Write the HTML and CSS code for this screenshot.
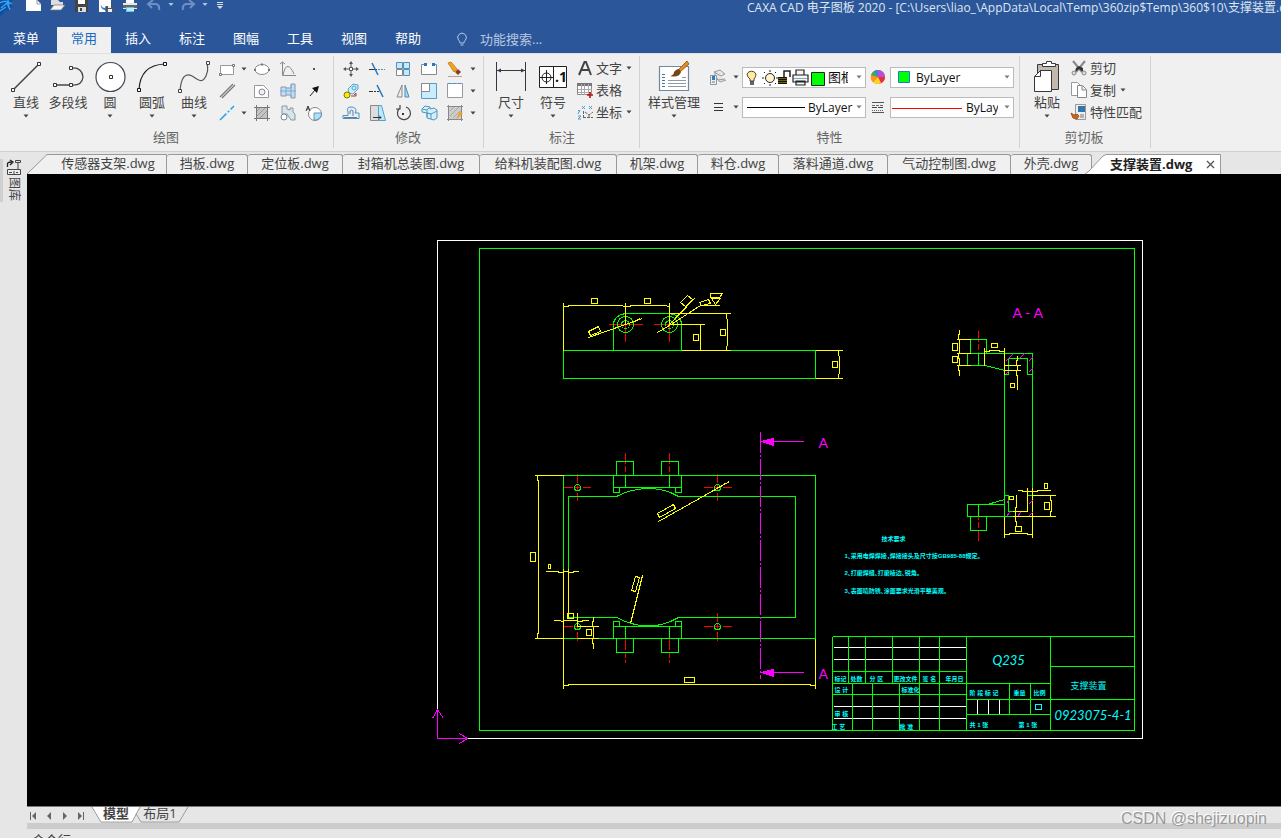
FILE: index.html
```html
<!DOCTYPE html>
<html lang="zh-CN">
<head>
<meta charset="utf-8">
<title>CAXA CAD 电子图板 2020</title>
<link rel="stylesheet" href="styles.css">
</head>
<body>
<svg class="defs" aria-hidden="true">
  <symbol id="caret" viewBox="0 0 10 10"><path d="M2.500 3.500h5L5 6.500z" fill="#444"/></symbol>
</svg>
<div class="app">
  <header class="titlebar">
    <div class="quick">
      <svg width="16" height="16" viewBox="0 0 16 16"><path d="M0 0h13l-2 4 2 3-4 1 2 3-4-1-3 1-1 3-3 2z" fill="#0b4f9e"/><path d="M0 3c4-3 8-2 12 1M1 8l6-5 3 7M0 11l6-4M8 0l1 8" stroke="#37a0f0" stroke-width="1.500" fill="none"/></svg>
      <button aria-label="新建"><svg width="16" height="14" viewBox="0 0 16 14"><path d="M0 0h11l4 4v7H0z" fill="#fff"/><path d="M11 0v4h4" fill="none" stroke="#999"/></svg></button>
      <button aria-label="打开"><svg width="16" height="14" viewBox="0 0 16 14"><path d="M1 0h7l2 2h3v3H1z" fill="#ddd"/><path d="M0 10L4 5h11l-4 5z" fill="#f4f4f4" stroke="#777" stroke-width=".7"/></svg></button>
      <button aria-label="保存"><svg width="16" height="14" viewBox="0 0 16 14"><path d="M1 0h13v12H1z" fill="#444"/><path d="M4 0h7v4H4z" fill="#fff"/><path d="M4 7h8v5H4z" fill="#ddd"/><path d="M6 8h2v3H6z" fill="#444"/></svg></button>
      <button aria-label="另存为"><svg width="16" height="14" viewBox="0 0 16 14"><path d="M1 0h12v12H1z" fill="#fff"/><path d="M3 3v2q1 3 4 3V6l3 3-3 3v-2Q2 9 3 3z" fill="#2b78bd"/><path d="M8 6h7v6H8z" fill="#555"/><path d="M10 6h3v2h-3zM10 9h4v3h-4z" fill="#eee"/></svg></button>
      <button aria-label="打印"><svg width="16" height="14" viewBox="0 0 16 14"><path d="M4 0h8v3H4z" fill="#fff"/><path d="M1 3h14v6H1z" fill="#e8e8e8"/><path d="M1 5h14v3H1z" fill="#666"/><path d="M4 7h8v5H4z" fill="#5fc7e8"/><path d="M5 8h7v3H5z" fill="#bcecfa"/></svg></button>
      <button aria-label="撤销"><svg width="16" height="14" viewBox="0 0 16 14"><path d="M2 4h8q4 1 3 6M7 0L2 4l4 4" fill="none" stroke="#6f8fc3" stroke-width="2"/></svg></button>
      <svg class="qc" width="10" height="10" viewBox="0 0 10 10"><path d="M2.500 3h5L5 6z" fill="#b5c4df"/></svg>
      <button aria-label="重做"><svg width="16" height="14" viewBox="0 0 16 14"><path d="M14 4H6Q2 5 3 10M9 0l5 4-4 4" fill="none" stroke="#6f8fc3" stroke-width="2"/></svg></button>
      <svg class="qc" width="10" height="10" viewBox="0 0 10 10"><path d="M2.500 3h5L5 6z" fill="#b5c4df"/></svg>
      <svg class="qc" width="12" height="10" viewBox="0 0 12 10"><path d="M3 2.500h6M3 4.500h6" stroke="#ddd"/><path d="M3 6h6L6 9z" fill="#ddd"/></svg>
    </div>
    <h1>CAXA CAD 电子图板 2020 - [C:\Users\liao_\AppData\Local\Temp\360zip$Temp\360$10\支撑装置.dwg]</h1>
  </header>
  <nav class="menu">
    <button class="file">菜单</button><button class="on">常用</button><button>插入</button><button>标注</button><button>图幅</button><button>工具</button><button>视图</button><button>帮助</button>
    <label class="search"><svg width="12" height="16" viewBox="0 0 12 16"><path d="M4 11Q4 9 2.500 8a4.300 4.300 0 1 1 7 0Q8 9 8 11zM4.500 13h3" fill="none" stroke="#b9c7df"/></svg><input placeholder="功能搜索..." aria-label="功能搜索"></label>
  </nav>
  <section class="ribbon">
    <div class="group draw">
      <div class="body">
        <button class="big"><svg width="36" height="36" viewBox="0 0 36 36"><path d="M5 32L31 6" stroke="#444852" stroke-width="1.600"/><path d="M3.500 30.500h3v3h-3zM29.500 4.500h3v3h-3z" fill="#fff" stroke="#333" stroke-width="1"/></svg>直线<svg class="caret"><use href="#caret"/></svg></button>
        <button class="big"><svg width="36" height="36" viewBox="0 0 36 36"><path d="M5 27H21q11 1 12-8-1-10-12-9" fill="none" stroke="#444852" stroke-width="1.300"/><path d="M3.500 25.500h3v3h-3zM19.500 25.500h3v3h-3zM19.500 8.500h3v3h-3z" fill="#fff" stroke="#333"/></svg>多段线</button>
        <button class="big"><svg width="36" height="36" viewBox="0 0 36 36"><circle cx="18.500" cy="19" r="14.500" fill="#fff" stroke="#444852" stroke-width="1.200"/><path d="M17.500 17.500h3v3h-3z" fill="#fff" stroke="#333"/></svg>圆<svg class="caret"><use href="#caret"/></svg></button>
        <button class="big"><svg width="36" height="36" viewBox="0 0 36 36"><path d="M5 32Q6 7 31 6" fill="none" stroke="#222" stroke-width="1.200"/><path d="M3.500 30.500h3v3h-3zM29.500 4.500h3v3h-3z" fill="#fff" stroke="#111"/></svg>圆弧<svg class="caret"><use href="#caret"/></svg></button>
        <button class="big"><svg width="36" height="36" viewBox="0 0 36 36"><path d="M4 33C5 20 9 14 16 18S26 26 30 18 30 9 32 5" fill="none" stroke="#555" stroke-width="1.200"/><path d="M2.500 31.500h3v3h-3zM30.500 3.500h3v3h-3z" fill="#fff" stroke="#444"/></svg>曲线<svg class="caret"><use href="#caret"/></svg></button>
        <div class="tools draw-tools">
          <button aria-label="矩形"><svg viewBox="0 0 18 18"><path d="M2.500 5.500h13v9h-13z" fill="#fff" stroke="#999"/><path d="M1.500 13.500h2v2h-2zM14.500 4.500h2v2h-2z" fill="#fff" stroke="#777"/></svg></button><svg class="caret"><use href="#caret"/></svg>
          <button aria-label="椭圆"><svg viewBox="0 0 18 18"><ellipse cx="9" cy="9.500" rx="7" ry="5" fill="#fff" stroke="#888"/><path d="M1 9h2v2H1zM15 9h2v2h-2zM8 3.500h2v2H8z" fill="#777"/></svg></button>
          <button aria-label="公式曲线"><svg viewBox="0 0 18 18"><path d="M3.500 2v13.500H17M1 4l2.500-2L6 4M4 15Q6 6 9 6.500T15 14" fill="none" stroke="#888"/></svg></button>
          <button aria-label="点"><svg viewBox="0 0 18 18"><path d="M8 8h2v2H8z" fill="#555"/></svg></button>
          <button aria-label="平行线"><svg viewBox="0 0 18 18"><path d="M2 15L15 2M4 16L17 3" stroke="#777" stroke-width="1.300"/></svg></button><i></i>
          <button aria-label="局部放大"><svg viewBox="0 0 18 18"><path d="M1.500 3.500h9l5 5v7h-14z" fill="#fff" stroke="#999"/><circle cx="9" cy="10" r="3" fill="#eef" stroke="#888"/></svg></button>
          <button aria-label="轴"><svg viewBox="0 0 18 18"><path d="M2 5h5v1h5V2h4v14h-4v-3H7v1H2z" fill="#c8dcf0" stroke="#8799aa"/><path d="M1 9h16M7 6v7M12 3v12" stroke="#6faede"/></svg></button>
          <button aria-label="箭头"><svg viewBox="0 0 18 18"><path d="M5 14l5-6" stroke="#222"/><path d="M14 4l-2 7-5-5z" fill="#111"/></svg></button>
          <button aria-label="中心线"><svg viewBox="0 0 18 18"><path d="M2 16L16 2" stroke="#27a5e8" stroke-width="1.500" stroke-dasharray="9 2 2 2"/></svg></button><svg class="caret"><use href="#caret"/></svg>
          <button aria-label="剖面线"><svg viewBox="0 0 18 18"><path d="M3 3h12v12H3z" fill="#c4c4c4"/><path d="M4 7l4-4M4 12l9-9M7 14l7-7" stroke="#999"/><path d="M3.500 1v16M14.500 1v16M1 3.500h16M1 14.500h16" stroke="#777" fill="none"/></svg></button>
          <button aria-label="孔"><svg viewBox="0 0 18 18"><path d="M3 2h5v3l3 1V4h3v4l2 2v6h-4l-2-3-2-3H3z" fill="#d6e4f0" stroke="#899"/><circle cx="5" cy="13" r="3" fill="#fff" stroke="#788"/></svg></button>
          <button aria-label="面积"><svg viewBox="0 0 18 18"><circle cx="10" cy="10" r="6.500" fill="#fff" stroke="#888"/><path d="M9 9h7.500a6.500 6.500 0 0 1-7.500 7z" fill="#aee0f8" stroke="#69a"/><path d="M1 7l2-5 2 5M2 5h2" fill="none" stroke="#333"/></svg></button>
        </div>
      </div>
      <h2>绘图</h2>
    </div>
    <div class="group modify">
      <div class="body">
        <div class="tools modify-tools">
          <button aria-label="平移"><svg viewBox="0 0 18 18"><path d="M9 1l2 3H7zM9 17l2-3H7zM1 9l3-2v4zM17 9l-3-2v4z" fill="#555"/><path d="M9 4v3M9 11v3M4 9h3M11 9h3" stroke="#555"/><path d="M7.500 7.500h3v3h-3z" fill="#fff" stroke="#555"/></svg></button>
          <button aria-label="裁剪"><svg viewBox="0 0 18 18"><path d="M1 9.500h8" stroke="#333"/><path d="M4 3l6 12" stroke="#2478bd" stroke-width="1.500"/><path d="M10 9.500h7" stroke="#3197d3" stroke-dasharray="2 1"/></svg></button>
          <button aria-label="阵列"><svg viewBox="0 0 18 18"><path d="M2.500 2.500h6v6h-6zM9.500 2.500h6v6h-6zM9.500 9.500h6v6h-6z" fill="#c6eafa" stroke="#568eb8"/><path d="M2.500 9.500h6v6h-6z" fill="#fff" stroke="#888"/></svg></button>
          <button aria-label="打断"><svg viewBox="0 0 18 18"><path d="M5 4.500H1.500v10h15v-10H13" fill="#fff" stroke="#888"/><path d="M4 3h3v3H4zM12 3h3v3h-3z" fill="#237bc4"/></svg></button>
          <button aria-label="删除"><svg viewBox="0 0 18 18"><path d="M2 3l3-1 6 7-3 3z" fill="#f2a416" stroke="#c98b20"/><path d="M9 12l3-3 3 3-3 3z" fill="#8c3b25"/><path d="M2 16.500h14" stroke="#b9a48d"/></svg></button><svg class="caret"><use href="#caret"/></svg>
          <button aria-label="复制"><svg viewBox="0 0 18 18"><path d="M6 7l5-5 5 1v4l-5 5-4-1z" fill="#ccecfa" stroke="#58a4d2"/><circle cx="12" cy="6" r="2" fill="none" stroke="#58a4d2"/><circle cx="5" cy="13" r="3" fill="#fbe80c" stroke="#827900"/><path d="M9 14h5v-3l-2 2" fill="none" stroke="#a33"/></svg></button>
          <button aria-label="延伸"><svg viewBox="0 0 18 18"><path d="M1 9.500h4" stroke="#333"/><path d="M6 9.500h7" stroke="#333" stroke-dasharray="2 1"/><path d="M9 3l6 12" stroke="#2478bd" stroke-width="1.500"/></svg></button>
          <button aria-label="镜像"><svg viewBox="0 0 18 18"><path d="M8 3v12H3z" fill="#eee" stroke="#888"/><path d="M11 3v12h4z" fill="#a7d8f2" stroke="#508eb3"/></svg></button>
          <button aria-label="缩放"><svg viewBox="0 0 18 18"><path d="M1.500 1.500h15v15h-15z" fill="#c8edff" stroke="#5a99c0"/><path d="M1.500 1.500h8v8h-8z" fill="#fff" stroke="#888"/></svg></button>
          <button aria-label="分解"><svg viewBox="0 0 18 18"><path d="M1.500 1.500h15v14h-15z" fill="#fff" stroke="#999"/><path d="M2 1.500h15" stroke="#369ad3" stroke-dasharray="3 2"/></svg></button><svg class="caret"><use href="#caret"/></svg>
          <button aria-label="偏移"><svg viewBox="0 0 18 18"><path d="M1 11.500h5V8Q4 3 9 3t5 4l-1 2h4v5.500H1z" fill="#e0f1fa" stroke="#4f91b9"/><path d="M2 13.500h13M8 10V7q2-2 3 0v5" fill="none" stroke="#778"/></svg></button>
          <button aria-label="拉伸"><svg viewBox="0 0 18 18"><path d="M2.500 1.500h8v15h-8z" fill="#ddd" stroke="#888"/><path d="M10.500 1.500h3l4 15h-7z" fill="#bfe9fa" stroke="#54a2cb"/><path d="M5 13.500h8m-2-2l2 2-2 2" stroke="#333" fill="none"/></svg></button>
          <button aria-label="旋转"><svg viewBox="0 0 18 18"><path d="M6 4a6.500 6.500 0 1 0 6-1M6 1v4H2" fill="none" stroke="#444" stroke-width="1.200"/><path d="M8 9h2v2H8z" fill="#333"/></svg></button>
          <button aria-label="三维"><svg viewBox="0 0 18 18"><path d="M2 5l3-3 5 1v2l4-1 3 2v8l-3 2-7-2V9L2 8z" fill="#d4eff9" stroke="#4896bd"/><path d="M2 5l5 1v7M7 6l3-3M7 9l4 1v5M11 10l6-3M11 10L7 9" fill="none" stroke="#559bc2"/></svg></button>
          <button aria-label="编辑填充"><svg viewBox="0 0 18 18"><path d="M3 3h12v12H3z" fill="#ccc"/><path d="M4 7l4-4M4 12l9-9M7 14l7-7" stroke="#aaa"/><path d="M2.500 1v16M15.500 1v16M1 2.500h16M1 15.500h16" stroke="#888" fill="none"/><path d="M10 15l4-8 3 2-5 5z" fill="#eda225"/></svg></button><svg class="caret"><use href="#caret"/></svg>
        </div>
      </div>
      <h2>修改</h2>
    </div>
    <div class="group annotate">
      <div class="body">
        <button class="big"><svg width="36" height="36" viewBox="0 0 36 36"><path d="M3.500 4v29M32.500 4v29M4 12.500h28" stroke="#333842"/><path d="M4 12.500l4-2v4zM32 12.500l-4-2v4z" fill="#333842"/></svg>尺寸<svg class="caret"><use href="#caret"/></svg></button>
        <button class="big"><svg width="36" height="36" viewBox="0 0 36 36"><path d="M4.500 8.500h27v21h-27zM18.500 8v22" fill="#fff" stroke="#222"/><circle cx="11.500" cy="19.500" r="4.500" fill="none" stroke="#222"/><path d="M5 19.500h13M11.500 12v14" stroke="#222"/><text x="20" y="24" class="icon-num">.1</text></svg>符号<svg class="caret"><use href="#caret"/></svg></button>
        <div class="rows">
          <button class="small"><svg viewBox="0 0 18 18"><path d="M3 16L8.500 3h1.500L15 16M5 11h8" stroke="#444" stroke-width="2" fill="none"/></svg>文字<svg class="caret"><use href="#caret"/></svg></button>
          <button class="small"><svg viewBox="0 0 18 18"><path d="M1.500 2.500h14v11h-14z" fill="#fff" stroke="#888"/><path d="M1 2h15v3H1z" fill="#777"/><path d="M2 8.500h14M2 11.500h14M5.500 3v11M8.500 3v11M12.500 3v11" stroke="#aaa"/><path d="M11 14h6M14 11v6" stroke="#b31414" stroke-width="1.600"/></svg>表格</button>
          <button class="small"><svg viewBox="0 0 18 18"><path d="M6 3l3 3M9 3L6 6M13 3l3 3M16 3l-3 3M2 7l2 2M4 7l-2 4M2 13h3l-3 3h3" stroke="#4a9bd0" fill="none"/><path d="M7.500 8v8M7 14.500h10M9 9l4 3 4-3M13 12v4" stroke="#666" fill="none" stroke-dasharray="3 1"/></svg>坐标<svg class="caret"><use href="#caret"/></svg></button>
        </div>
      </div>
      <h2>标注</h2>
    </div>
    <div class="group props">
      <div class="body">
        <button class="big wide"><svg width="36" height="36" viewBox="0 0 36 36"><path d="M3.500 8.500h29v24h-29z" fill="#fff" stroke="#71889e" stroke-width="1.200"/><path d="M6 16.500h4M6 19.500h4M6 22.500h4M6 25.500h4M6 28.500h4" stroke="#49769e" stroke-dasharray="3 1"/><path d="M12 22.500h18M12 25.500h18M12 28.500h18M26 19.500h4" stroke="#8b99a9"/><path d="M31 3l2 3-9 8-2-2z" fill="#dd8d2c" stroke="#ad651b"/><path d="M23 11l2 3q-2 6-11 4 4-1 4-4 2-3 5-3z" fill="#734719"/></svg>样式管理<svg class="caret"><use href="#caret"/></svg></button>
        <div class="prop-grid">
          <button aria-label="图层"><svg viewBox="0 0 18 18"><path d="M5 4l6-2 5 4-4 2zM6 7l3 5 7-1M6 4v5l5 5 6-2" fill="#e5e7eb" stroke="#999"/><path d="M1.500 7.500h6v9h-6z" fill="#eee" stroke="#89a"/><path d="M3 8h3v4H3z" fill="#317eb6"/><path d="M3 14h3" stroke="#777"/></svg></button><svg class="caret"><use href="#caret"/></svg>
          <div class="combo"><select class="layer" aria-label="当前图层"><option>图框层</option></select>
            <svg class="adorn" width="84" height="19" viewBox="0 0 84 19"><path d="M7 11Q4 9 4 6a5 5 0 0 1 9 0q0 3-2 5v2H7z" fill="#ffeaa2" stroke="#543"/><path d="M7 14h4M7 16h4" stroke="#333" stroke-width="1.500"/><circle cx="27" cy="10" r="4.500" fill="#fff4cb" stroke="#222"/><path d="M27 2v2M27 16v2M19 10h2M33 10h2M21 4l1 1M32 15l1 1M21 16l1-1M32 5l1-1" stroke="#222"/><path d="M41 9V3h6v6" fill="none" stroke="#222" stroke-width="1.500"/><path d="M35 9h9v7h-9z" fill="#705f00"/><path d="M35 9.500h9M35 11.500h9M35 13.500h9M35 15.500h9" stroke="#111"/><path d="M53 7V2h8v5M50 7h15v7H50zM53 13h9v4h-9z" fill="#f6f6f6" stroke="#222" stroke-width="1.200"/><path d="M51 10.500h13" stroke="#8aa"/><path d="M68.500 4.500h13v13h-13z" fill="#0f0" stroke="#152515"/></svg>
            <svg class="caret"><use href="#caret"/></svg></div>
          <svg class="mid" viewBox="0 0 18 18"><circle cx="9" cy="9" r="7" fill="#f24433"/><path d="M9 9V2a7 7 0 0 1 7 7z" fill="#b352d6"/><path d="M9 9h7a7 7 0 0 1-4 6z" fill="#e72f41"/><path d="M9 9l3 6a7 7 0 0 1-8-1z" fill="#ffd422"/><path d="M9 9l-5 5a7 7 0 0 1-2-7z" fill="#ff941c"/><path d="M9 9L2 7a7 7 0 0 1 3-4z" fill="#35b54a"/><path d="M9 9L5 3a7 7 0 0 1 4-1z" fill="#2d89e8"/></svg>
          <div class="combo"><select class="color" aria-label="颜色"><option>ByLayer</option></select>
            <svg class="adorn" width="24" height="19" viewBox="0 0 24 19"><path d="M7.500 3.500h11v11h-11z" fill="#0f0" stroke="#237bd0"/></svg><svg class="caret"><use href="#caret"/></svg></div>
          <button aria-label="线宽"><svg viewBox="0 0 18 18"><path d="M5 5.500h9M5 9.500h9M5 12.500h9" stroke="#333"/></svg></button><svg class="caret"><use href="#caret"/></svg>
          <div class="combo"><select class="line" aria-label="线宽"><option>ByLayer</option></select>
            <svg class="adorn" width="66" height="19" viewBox="0 0 66 19"><path d="M4 9.500h58" stroke="#000"/></svg><svg class="caret"><use href="#caret"/></svg></div>
          <svg class="mid" viewBox="0 0 18 18"><path d="M3 4.500h12M3 14.500h12" stroke="#555"/><path d="M3 7.500h12" stroke="#666" stroke-dasharray="3 1"/><path d="M3 9.500h12" stroke="#444" stroke-dasharray="5 1"/><path d="M3 12.500h12" stroke="#666" stroke-dasharray="1 1"/></svg>
          <div class="combo"><select class="type" aria-label="线型"><option>ByLayer</option></select>
            <svg class="adorn" width="74" height="19" viewBox="0 0 74 19"><path d="M1 10.500h70" stroke="#f00"/></svg><svg class="caret"><use href="#caret"/></svg></div>
        </div>
      </div>
      <h2>特性</h2>
    </div>
    <div class="group clip">
      <div class="body">
        <button class="big"><svg width="36" height="36" viewBox="0 0 36 36"><path d="M8.500 6.500h21v25h-21z" fill="#c4b8aa" stroke="#333842"/><path d="M13.500 8.500v-3h4v-2h5v2h4v3z" fill="#fff" stroke="#333842"/><path d="M5.500 18.500l6-6h11v21h-17zM11.500 12v6.500h-6" fill="#fff" stroke="#333842"/></svg>粘贴<svg class="caret"><use href="#caret"/></svg></button>
        <div class="rows">
          <button class="small"><svg viewBox="0 0 18 18"><path d="M3 2l9 11M15 2L6 13" stroke="#888" stroke-width="2"/><path d="M6 9l3-2 4 2 0 4-4-3-4 3z" fill="#333"/><circle cx="4" cy="14" r="2" fill="#ddd" stroke="#888"/><circle cx="14" cy="14" r="2" fill="#ddd" stroke="#888"/></svg>剪切</button>
          <button class="small"><svg viewBox="0 0 18 18"><path d="M1.500 1.500h6l3 3v10h-9z" fill="#fff" stroke="#999"/><path d="M7.500 4.500h5l4 4v8h-9zM12 5v4h4" fill="#fff" stroke="#888"/></svg>复制<svg class="caret"><use href="#caret"/></svg></button>
          <button class="small"><svg viewBox="0 0 18 18"><path d="M5.500 1.500h10v15h-10z" fill="#eee" stroke="#999"/><path d="M8 3h7v6H8z" fill="#3374ab"/><path d="M10 12h4M10 14h4" stroke="#777"/><path d="M1 10l3 2 3-1 2 2-2 3-4-1z" fill="#b86b27" stroke="#a52"/></svg>特性匹配</button>
        </div>
      </div>
      <h2>剪切板</h2>
    </div>
  </section>
  <main class="work">
    <aside class="side">
      <button class="library"><svg width="16" height="16" viewBox="0 0 16 16"><path d="M1.500 8V5q0-2 4-2M4 1l3 2-3 3" fill="none" stroke="#222" stroke-width="1.300"/><path d="M9.500 1.500h5v2h-5zM12 4v6" fill="none" stroke="#444"/><path d="M1.500 10.500h13v5h-13zM3 13.500h3M8 12v3M10 13.500h2" fill="#eee" stroke="#444"/></svg><span>图库</span></button>
    </aside>
    <div class="stage">
      <nav class="docs">
        <button class="doc first"><svg class="shape" viewBox="0 0 140 20" preserveAspectRatio="none"><path d="M0 20L20 .5H139.500V20" fill="#f0f0f0" stroke="#999"/></svg><span>传感器支架.dwg</span></button>
        <button class="doc w2">挡板.dwg</button><button class="doc w3">定位板.dwg</button><button class="doc w6">封箱机总装图.dwg</button><button class="doc w6">给料机装配图.dwg</button><button class="doc w2">机架.dwg</button><button class="doc w2">料仓.dwg</button><button class="doc w4">落料通道.dwg</button><button class="doc w5">气动控制图.dwg</button><button class="doc w2">外壳.dwg</button>
        <div class="doc active"><svg class="shape" viewBox="0 0 136 20" preserveAspectRatio="none"><path d="M0 20L4 17 18 2 21 .5H135.500V20" fill="#fff" stroke="#999"/></svg><span>支撑装置.dwg</span><button aria-label="关闭"><svg width="9" height="9" viewBox="0 0 9 9"><path d="M1 1l7 7M8 1L1 8" stroke="#555" stroke-width="1.300"/></svg></button></div>
      </nav>
      <div class="canvas">
        <svg class="drawing" viewBox="26.500 173.500 1254 632" preserveAspectRatio="xMinYMin meet">
          <g class="white"><path d="M437 240H1142V738H437z"/><path d="M833 647H966M833 659H966M833 706H966M833 718H966M977 699V714M988 699V714M999 699V714"/></g>
          <g class="red">
            <path d="M608 324H642M625 313V341M653 324H678M669 313V341"/>
            <path d="M625 452V475M669 452V475M625 638V662M669 638V662" stroke-dasharray="11 2 6 2"/>
            <path d="M563 487H590M577 473V500M703 487H731M717 473V500M563 626H590M577 612V640M703 626H731M717 612V640" stroke-dasharray="9 2 6 2"/>
            <path d="M978 330V353M978 540V516" stroke-dasharray="11 2 6 2"/>
          </g>
          <g class="green">
            <path d="M479 248H1134V730H479z"/>
            <path d="M563 350H815V378H563zM613 350V324Q613 315 625 313H669Q681 315 681 324V350"/>
            <circle cx="625" cy="324" r="8"/><circle cx="625" cy="324" r="4"/><circle cx="669" cy="324" r="8"/><circle cx="669" cy="324" r="4"/>
            <path d="M563 475H815V638H563zM568 617V496H616L625 492Q648 484 670 492L678 496H795V617H678L670 621Q648 630 625 621L616 617H568"/>
            <path d="M616 475V461H633V475M661 475V461H678V475M613 475V492H619V487M613 487H681V475M675 487V492H681V487M625 475V487M669 475V487"/>
            <path d="M616 638V652H633V638M661 638V652H678V638M613 638V621H619V626M613 626H681V638M675 626V621H681V626M625 638V626M669 638V626"/>
            <circle cx="577" cy="487" r="3"/><circle cx="717" cy="487" r="3"/><circle cx="577" cy="626" r="3"/><circle cx="717" cy="626" r="3"/>
            <path d="M970 353V339H986V353M967 353H1032V516H967V504H1004M967 353V365H985L1004 370M978 353V365M1004 353V516M1004 374H1008V358H1027V374H1032M1004 495H1008V511H1027V495H1032M978 504V516M987 504L1004 499M970 516V530H986V516"/>
            <path d="M832 636H1134M832 636V730M832 671H966M832 683H1050M832 694H966M848 636V683M865 636V683M892 636V683M919 636V730M939 636V730M966 636V730M852 683V730M872 683V730M899 683V730M1050 636V730M1009 683V714M1030 683V714M966 699H1050M966 714H1050M1050 666H1134M1050 699H1134"/>
          </g>
          <g class="yellow">
            <path d="M563 302V350M563 306H568V305H620L625 306M625 302V324M625 306H630V305H664L669 306M669 302V324M591 298H597V303H591zM644 298H650V303H644z"/>
            <path d="M669 313H730M669 324H704M700 324V350M681 350H730M693 334H698V340H693zM720 329H725V335H720zM726 313V318M727 318V345M726 345V350"/>
            <path d="M815 350H842M815 378H842M838 350V355M839 355V373M838 373V378M832 361H837V367H832z"/>
            <path d="M588 337L642 318M634 321L640 318M588 331L598 326 600 331 590 335zM657 332L669 325 700 305H719M699 302L708 299 710 303 701 305zM669 324L694 298M680 302L687 295 692 299 685 306zM710 293H722L719 297H710zM711 298L715 304 720 298M711 298H720"/>
            <path d="M534 475H563M534 638H563M537 475V480H538V633H537V638M530 552H535V561H530zM545 571H558V572H563V571H568V572H573V571H578M548 564H550V568H548zM563 568V688M568 568V617M567 613H573V618H567z"/>
            <path d="M553 620H558L563 621V620H577V621H582V620H588M577 612V626H598M577 638H598M593 616V621H592V626H593V638H592V643H593V648M586 629H591V635H586z"/>
            <path d="M815 638V688M563 685H568V684H810V685H815M684 677H694V682H684z"/>
            <path d="M658 521L729 481M711 491L725 483M657 513L673 504 675 508 659 517zM630 623L642 575M635 576L639 577 635 591 631 590z"/>
            <path d="M959 329V334H958V339H959V353H958V358H959V365H958V370H959V375M956 339H970M956 353H970M956 365H970M952 343H957V350H952zM952 356H957V362H952zM984 347V365M1004 347V374M984 351H989V350H999V351H1004M991 343H997V347H991z"/>
            <path d="M1004 365H1020M1004 370H1020M1017 355V360H1016V365H1017V370H1016V375H1017V389M1010 383H1014V387H1010z"/>
            <path d="M1004 516V537M1032 487V537M1027 487V511M1004 534H1009V533H1027V534H1032M1015 526H1021V531H1015zM1016 494V507H1015V521H1016V526M1009 496H1013V499H1009zM1012 511H1027M1012 516H1055M1032 495H1055M1050 495V500H1051V511H1050V516M1044 502H1049V509H1044zM1017 490H1022V491H1037V490H1050M1044 483H1047V488H1044z"/>
          </g>
          <g class="magenta">
            <path d="M760 431V678" stroke-dasharray="21 2 2 2"/><path d="M773 441H803M773 672H803M437 738V709M437 738H467M432 718L437 709 443 718M459 733L467 738 459 743"/>
            <path d="M1005 361L1012 354M1019 358L1024 353M1028 361L1032 357M1028 372L1032 368M1005 374L1008 371M1006 503L1008 500M1006 516L1009 512M1017 516L1020 512M1028 504L1032 500M1028 516L1032 512"/>
            <path class="solid" d="M761 441l12-3v7zM761 672l12-3v7z"/>
          </g>
          <g class="mark"><text x="818" y="447">A</text><text x="818" y="678">A</text><text x="1012" y="317">A - A</text></g>
          <g class="cyan">
            <path d="M1035 704H1041V709H1035z"/>
            <text x="881" y="540">技术要求</text>
            <text x="844" y="557">1、采用电焊焊接，焊接接头及尺寸按GB985-88规定。</text>
            <text x="844" y="574">2、打磨焊缝、打磨棱边、锐角。</text>
            <text x="844" y="592">3、表面喷防锈、涂面要求光滑平整美观。</text>
            <text x="834" y="680">标记</text><text x="850" y="680">处数</text><text x="869" y="680">分 区</text><text x="893" y="680">更改文件</text><text x="922" y="680">签 名</text><text x="945" y="680">年月日</text>
            <text x="834" y="691">设 计</text><text x="901" y="691">标准化</text><text x="834" y="715">审 核</text><text x="831" y="728">工 艺</text><text x="899" y="728">批 准</text>
            <text x="969" y="694">阶 段 标 记</text><text x="1013" y="694">重量</text><text x="1033" y="694">比例</text><text x="969" y="726">共 1 张</text><text x="1018" y="726">第 1 张</text>
            <text class="name" x="1070" y="688">支撑装置</text><text class="num" x="992" y="664">Q235</text><text class="num" x="1054" y="719">0923075-4-1</text>
          </g>
        </svg>
      </div>
      <footer class="sheets">
        <div class="pager">
          <button aria-label="首页"><svg width="8" height="8" viewBox="0 0 8 8"><path d="M1 0h1v8H1zM7 0v8L3 4z" fill="#666"/></svg></button>
          <button aria-label="上一页"><svg width="8" height="8" viewBox="0 0 8 8"><path d="M6 0v8L2 4z" fill="#666"/></svg></button>
          <button aria-label="下一页"><svg width="8" height="8" viewBox="0 0 8 8"><path d="M2 0v8l4-4z" fill="#666"/></svg></button>
          <button aria-label="末页"><svg width="8" height="8" viewBox="0 0 8 8"><path d="M6 0h1v8H6zM1 0v8l4-4z" fill="#666"/></svg></button>
        </div>
        <button class="sheet current"><svg class="shape" viewBox="0 0 48 17" preserveAspectRatio="none"><path d="M0 0L9 16H40L48 0" fill="#fff" stroke="#999"/></svg><span>模型</span></button>
        <button class="sheet"><svg class="shape" viewBox="0 0 48 17" preserveAspectRatio="none"><path d="M-4 7L1 16H39L48 0" fill="none" stroke="#999"/></svg><span>布局1</span></button>
      </footer>
      <div class="splitter"></div>
      <div class="command">命令行</div>
    </div>
  </main>
  <div class="watermark">CSDN @shejizuopin</div>
</div>
</body>
</html>
```
FILE: styles.css
```css
* { box-sizing: border-box; }
body { margin: 0; font: 13px/18px "Open Sans", "Noto Sans CJK SC", sans-serif; color: #444; }
button, select, input { font: inherit; color: inherit; }
button { border: 0; padding: 0; background: none; white-space: nowrap; }
svg { display: block; flex: none; }
h1, h2 { margin: 0; font-weight: 400; }
.defs { position: absolute; width: 0; height: 0; }
.app { position: relative; display: flex; flex-direction: column; height: 100vh; overflow: hidden; background: #e6e6e6; }

.titlebar { display: flex; justify-content: space-between; height: 27px; background: #2b579a; overflow: hidden; }
.quick { display: flex; align-items: flex-start; gap: 8px; width: 230px; flex: none; }
.quick button:first-of-type { margin-left: 2px; }
.quick .qc { margin: 0 -4px; }
.quick .qc:last-child { margin-left: 0; }
.titlebar h1 { flex: none; width: 534px; font-size: 12px; line-height: 16px; color: #dfe6f2; white-space: nowrap; overflow: hidden; }

.menu { display: flex; height: 26px; background: #2b579a; color: #fff; }
.menu button { width: 54px; padding-bottom: 4px; }
.menu .file { width: 52px; margin-right: 5px; }
.menu .on { background: #f0f0f0; color: #1769c4; }
.search { display: flex; align-items: center; gap: 12px; margin-left: 21px; }
.search input { width: 120px; padding: 0 0 2px; border: 0; outline: 0; background: transparent; }
.search input::placeholder { color: #b9c7df; opacity: 1; }

.ribbon { display: flex; height: 99px; background: #f0f0f0; border-top: 1px solid #e0e0e0; border-bottom: 1px solid #d0d0d0; }
.group { position: relative; padding: 4px 5px; flex: none; }
.group::after { content: ""; position: absolute; right: 0; top: 2px; bottom: 3px; width: 1px; background: #d2d2d2; }
.group h2 { font-size: 13px; line-height: 18px; color: #666; text-align: center; }
.body { display: flex; align-items: flex-start; height: 70px; }
.draw { padding-right: 7px; }
.modify { padding-left: 4px; padding-right: 6px; }
.annotate { padding-left: 6px; padding-right: 6px; }
.props { padding-right: 6px; }
.clip { padding-left: 6px; padding-right: 9px; }
.big { display: flex; flex-direction: column; align-items: center; width: 42px; }
.big > svg:first-child { margin-bottom: -1px; }
.big.wide { width: 58px; }
.caret { width: 10px; height: 10px; }
.tools { display: grid; grid-auto-rows: 22px; align-items: center; justify-items: center; }
.tools button svg, .small > svg:first-child, .prop-grid button svg, .mid { width: 18px; height: 18px; }
.draw-tools { grid-template-columns: 24px 10px 26px 26px 26px; }
.modify-tools { grid-template-columns: repeat(5, 26px) 10px; }
.rows { display: flex; flex-direction: column; align-items: flex-start; }
.small { display: flex; align-items: center; gap: 2px; height: 22px; padding: 0 0 2px 2px; }
.icon-num { font: bold 14px "Open Sans", sans-serif; fill: #111; }
.prop-grid { display: grid; grid-template-columns: 30px 9px 124px 24px 124px; grid-auto-rows: 30px; align-items: center; justify-items: center; padding-top: 4px; }
.prop-grid > .caret { margin-right: 3px; }
.combo { position: relative; width: 100%; height: 21px; }
.combo select { appearance: none; width: 100%; height: 21px; border: 1px solid #bbb; border-radius: 0; background: #fff; color: #111; font-size: 12px; line-height: 19px; padding: 0 17px 0 25px; overflow: hidden; text-overflow: clip; }
.combo select.layer { padding-left: 85px; font-size: 13px; }
.combo select.line { padding-left: 65px; padding-right: 8px; }
.combo select.type { padding-left: 75px; padding-right: 15px; }
.combo .adorn { position: absolute; left: 1px; top: 1px; pointer-events: none; }
.combo .caret { position: absolute; right: 2px; top: 5px; opacity: .7; pointer-events: none; }

.work { display: flex; flex: 1; min-height: 0; }
.side { width: 27px; flex: none; padding-top: 7px; }
.library { display: flex; flex-direction: column; align-items: center; width: 24px; height: 43px; border-left: 3px solid #d0d0d0; }
.library span { writing-mode: vertical-rl; text-orientation: sideways; font-size: 12px; line-height: 18px; padding-top: 2px; }
.stage { display: flex; flex-direction: column; flex: 1; min-width: 0; }
.docs { display: flex; flex: none; height: 22px; padding-top: 2px; }
.doc { position: relative; flex: none; display: flex; justify-content: center; align-items: center; height: 20px; padding-bottom: 3px; border: 1px solid #999; border-width: 1px 1px 0 0; border-radius: 3px 3px 0 0; background: #f0f0f0; }
.doc span { position: relative; }
.first { width: 140px; padding-left: 22px; padding-bottom: 2px; border: 0; background: none; }
.w2 { width: 81px; }
.w3 { width: 95px; }
.w4 { width: 109px; }
.w5 { width: 123px; }
.w6 { width: 137px; }
.active { justify-content: space-between; width: 136px; margin-left: -7px; padding: 0 6px 0 25px; border: 0; background: none; color: #222; font-weight: 700; }
.active button { position: relative; }
.shape { position: absolute; left: 0; top: 0; width: 100%; height: 100%; overflow: visible; }
.canvas { flex: 1; min-height: 0; background: #000; overflow: hidden; }
.drawing { width: 100%; height: 100%; shape-rendering: crispEdges; }
.drawing g { fill: none; stroke-width: 1; }
.white { stroke: #fff; }
.red { stroke: #f00; }
.green { stroke: #0f0; }
.yellow { stroke: #ff0; }
.magenta { stroke: #f0f; }
.drawing .solid { fill: #f0f; }
.cyan { stroke: #0ff; }
.drawing text { stroke: none; fill: #0ff; font: 700 6px "Liberation Sans", "Noto Sans CJK SC", sans-serif; font-feature-settings: "halt"; }
.drawing .mark text { fill: #f0f; font: 400 14px Lato, sans-serif; }
.drawing .name { font-size: 9px; font-weight: 400; }
.drawing .num { font: italic 400 13px Lato, sans-serif; }

.sheets { display: flex; flex: none; height: 17px; border-top: 1px solid #777; }
.pager { display: flex; align-items: center; gap: 8px; width: 65px; padding: 2px 0 0 2px; }
.sheet { position: relative; width: 48px; height: 16px; line-height: 14px; }
.sheet span { position: relative; display: block; margin-top: -4px; }
.sheet + .sheet span { margin-left: -8px; }
.current { font-weight: 700; }
.splitter { flex: none; height: 6px; background: #ccc; }
.command { flex: none; height: 9px; padding: 2px 0 0 5px; overflow: hidden; }
.watermark { position: absolute; right: 14px; bottom: 9px; font: 16px/20px "Liberation Sans", Arial, sans-serif; color: #999; text-shadow: -1px -1px 0 #fff; }
```
